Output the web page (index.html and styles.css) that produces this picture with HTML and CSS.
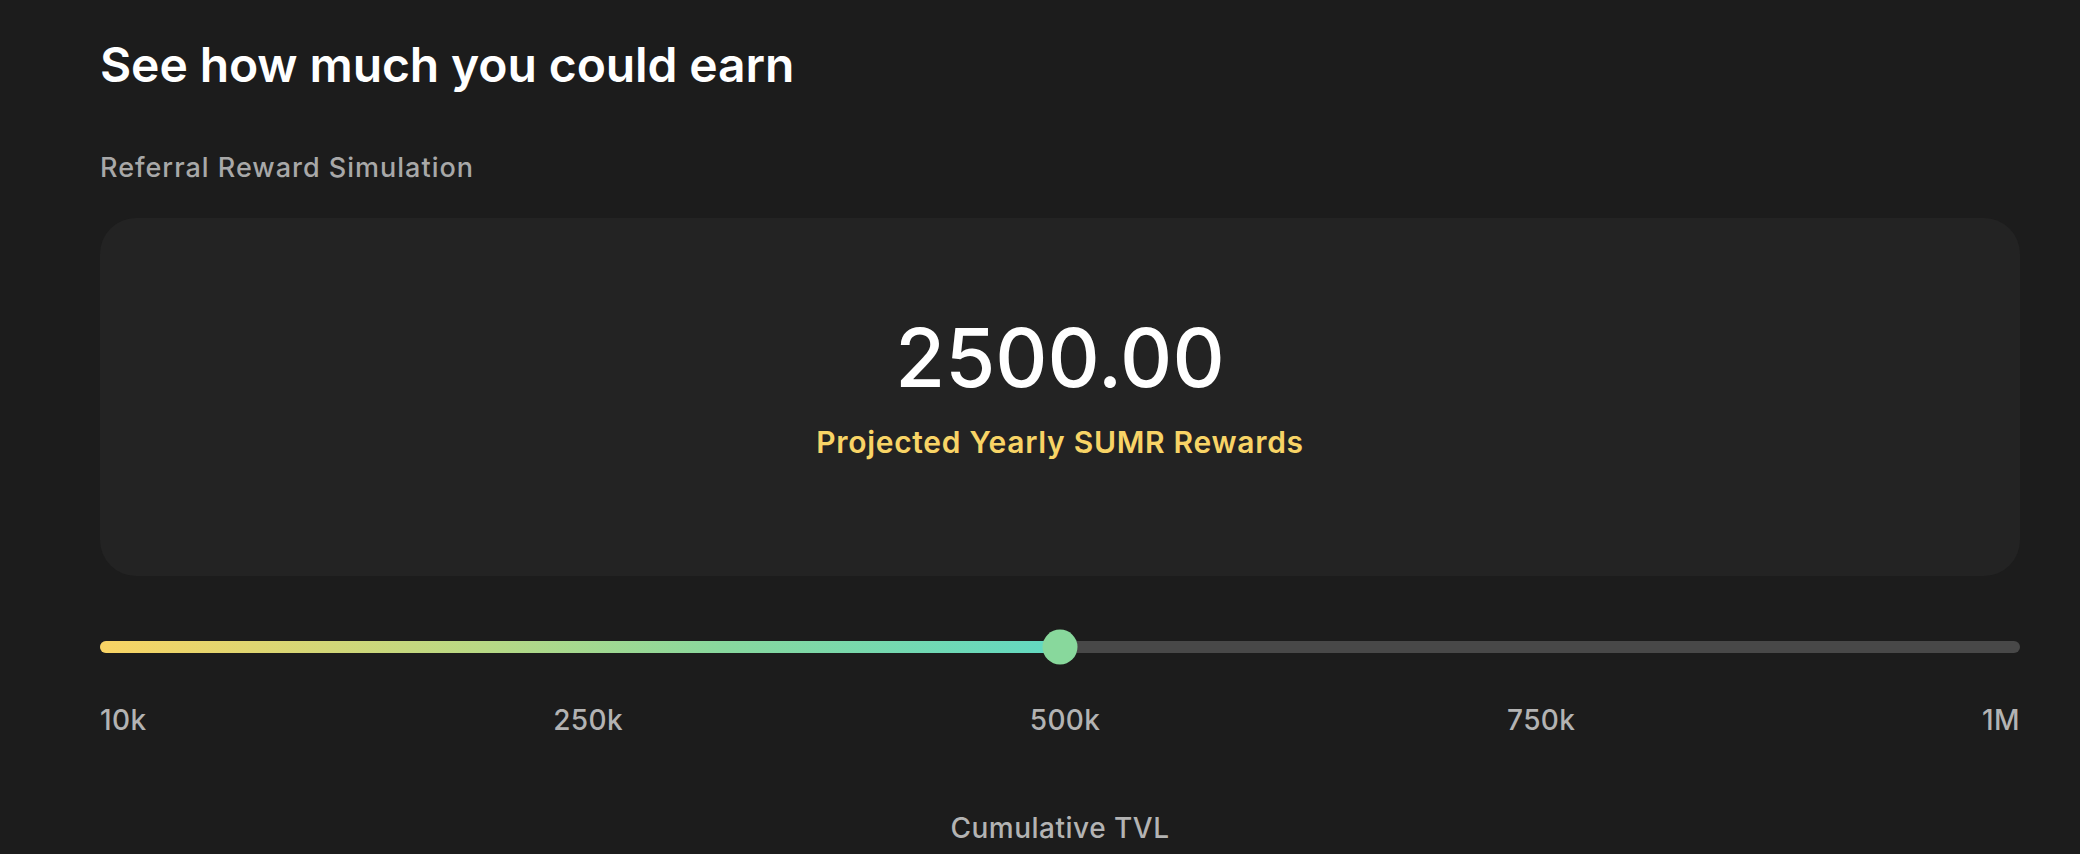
FILE: index.html
```html
<!DOCTYPE html>
<html lang="en">
<head>
<meta charset="utf-8">
<title>Referral Reward Simulation</title>
<link rel="stylesheet" href="styles.css">
</head>
<body>
<main class="page">
  <h1 class="title">See how much you could earn</h1>
  <h2 class="subtitle">Referral Reward Simulation</h2>
  <section class="card">
    <div class="amount">2500.00</div>
    <div class="amount-label">Projected Yearly SUMR Rewards</div>
  </section>
  <div class="slider">
    <div class="track">
      <div class="fill" style="width: 50%"></div>
      <div class="thumb" style="left: 50%"></div>
    </div>
  </div>
  <div class="ticks">
    <span>10k</span>
    <span>250k</span>
    <span>500k</span>
    <span>750k</span>
    <span>1M</span>
  </div>
  <div class="axis-label">Cumulative TVL</div>
</main>
</body>
</html>
```
FILE: styles.css
```css
html, body {
  margin: 0;
  padding: 0;
  background: #1c1c1c;
}
body {
  font-family: Inter, "Noto Sans", sans-serif;
  color: #ffffff;
  height: 854px;
  overflow: hidden;
}
.page {
  width: 1920px;
  margin-left: 100px;
  padding-top: 36px;
  display: flex;
  flex-direction: column;
}
.title {
  margin: 0;
  font-size: 48px;
  line-height: 58px;
  font-weight: 600;
  letter-spacing: -0.1px;
  color: #ffffff;
}
.subtitle {
  margin: 58px 0 0;
  font-size: 27px;
  line-height: 32px;
  font-weight: 500;
  letter-spacing: 1px;
  color: #a8a8a8;
}
.card {
  margin-top: 34px;
  height: 358px;
  box-sizing: border-box;
  padding-top: 90px;
  background: #232323;
  border-radius: 36px;
  display: flex;
  flex-direction: column;
  align-items: center;
}
.amount {
  font-size: 81px;
  line-height: 100px;
  font-weight: 500;
  color: #ffffff;
}
.amount-label {
  margin-top: 16px;
  font-size: 30px;
  line-height: 36px;
  font-weight: 600;
  letter-spacing: 0.7px;
  color: #f8d466;
}
.slider {
  margin-top: 53px;
  height: 35px;
  display: flex;
  align-items: center;
}
.track {
  position: relative;
  width: 100%;
  height: 12px;
  border-radius: 6px;
  background: #484848;
}
.fill {
  height: 100%;
  border-radius: 6px;
  background: linear-gradient(90deg, #f9d464 0%, #b8d985 40%, #88d89e 65%, #62d9c2 100%);
}
.thumb {
  position: absolute;
  top: 50%;
  width: 35px;
  height: 35px;
  border-radius: 50%;
  background: #88d89c;
  transform: translate(-50%, -50%);
}
.ticks {
  margin-top: 39px;
  display: flex;
  justify-content: space-between;
  font-size: 28px;
  line-height: 34px;
  font-weight: 500;
  letter-spacing: 0.4px;
  color: #b3b3b3;
}
.axis-label {
  margin-top: 74px;
  text-align: center;
  font-size: 28px;
  line-height: 34px;
  font-weight: 500;
  letter-spacing: 0.5px;
  color: #b3b3b3;
}
```
